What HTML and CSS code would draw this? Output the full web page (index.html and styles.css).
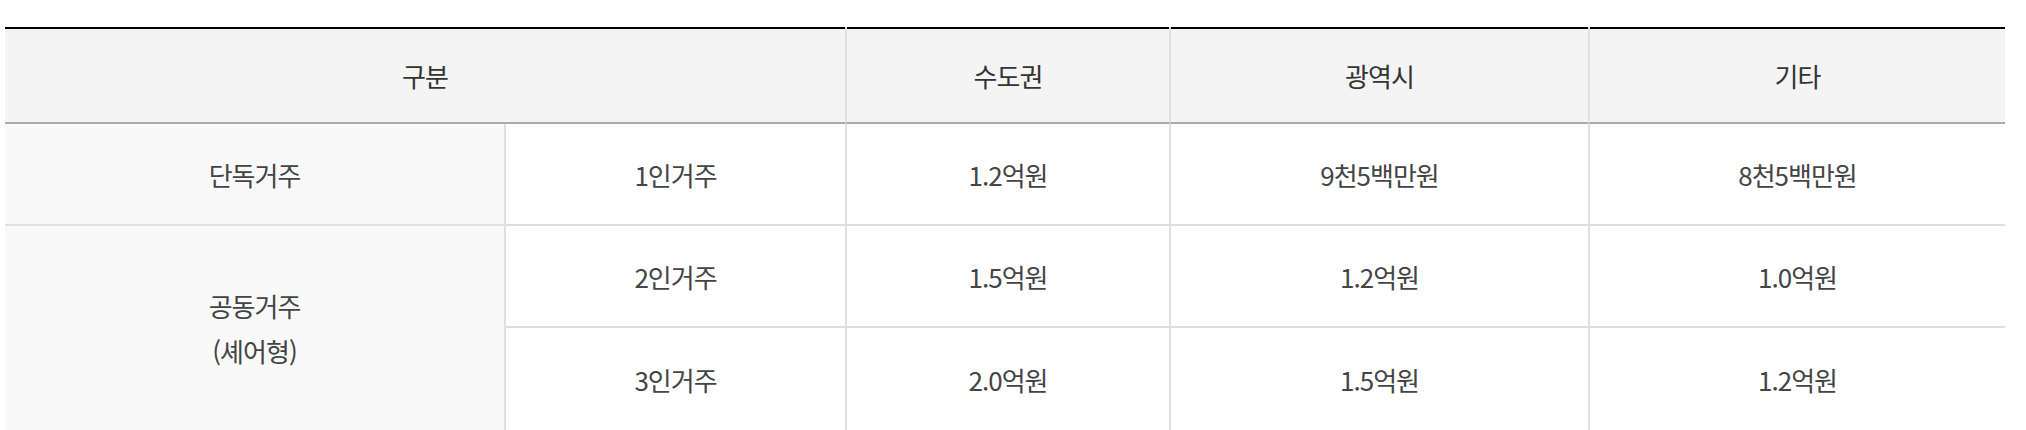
FILE: index.html
```html
<!DOCTYPE html>
<html lang="ko">
<head>
<meta charset="utf-8">
<title>거주 유형별 기준</title>
<link rel="stylesheet" href="styles.css">
</head>
<body>
<table class="tbl">
  <colgroup>
    <col class="c1"><col class="c2"><col class="c3"><col class="c4"><col class="c5">
  </colgroup>
  <thead>
    <tr>
      <th colspan="2" class="first">구분</th>
      <th>수도권</th>
      <th>광역시</th>
      <th>기타</th>
    </tr>
  </thead>
  <tbody>
    <tr>
      <td class="label">단독거주</td>
      <td class="sep">1인거주</td>
      <td class="sep">1.2억원</td>
      <td class="sep">9천5백만원</td>
      <td class="sep">8천5백만원</td>
    </tr>
    <tr>
      <td class="label" rowspan="2">공동거주<br>(셰어형)</td>
      <td class="sep">2인거주</td>
      <td class="sep">1.5억원</td>
      <td class="sep">1.2억원</td>
      <td class="sep">1.0억원</td>
    </tr>
    <tr class="last">
      <td class="sep">3인거주</td>
      <td class="sep">2.0억원</td>
      <td class="sep">1.5억원</td>
      <td class="sep">1.2억원</td>
    </tr>
  </tbody>
</table>
</body>
</html>
```

FILE: styles.css
```css
html, body {
  margin: 0;
  padding: 0;
  background: #ffffff;
}

body {
  padding: 27px 21px 0 5px;
  font-family: "Noto Sans CJK KR", "Noto Sans", sans-serif;
}

.tbl {
  width: 2000px;
  table-layout: fixed;
  border-collapse: separate;
  border-spacing: 0;
  font-size: 26px;
  letter-spacing: -1px;
  color: #444;
}

.c1 { width: 499px; }
.c2 { width: 341px; }
.c3 { width: 324px; }
.c4 { width: 419px; }
.c5 { width: 417px; }

.tbl th,
.tbl td {
  box-sizing: border-box;
  padding: 0;
  text-align: center;
  vertical-align: middle;
  font-weight: 400;
}

.tbl th {
  height: 97px;
  padding-top: 2px;
  color: #333;
  background: linear-gradient(#000, #000) 0 0 / 100% 2px no-repeat, #f4f4f4;
  background-origin: border-box;
  border-left: 2px solid #e0e0e0;
  border-bottom: 2px solid #aaaaaa;
}

.tbl th.first {
  border-left: none;
}

.tbl td {
  height: 102px;
  line-height: 45px;
  border-bottom: 2px solid #e0e0e0;
  background: #ffffff;
}

.tbl td.sep {
  border-left: 2px solid #e0e0e0;
}

.tbl td.label {
  background: #f9f9f9;
}

.tbl td.label[rowspan] {
  border-bottom: none;
}

.tbl tr.last td {
  border-bottom: none;
}
```
